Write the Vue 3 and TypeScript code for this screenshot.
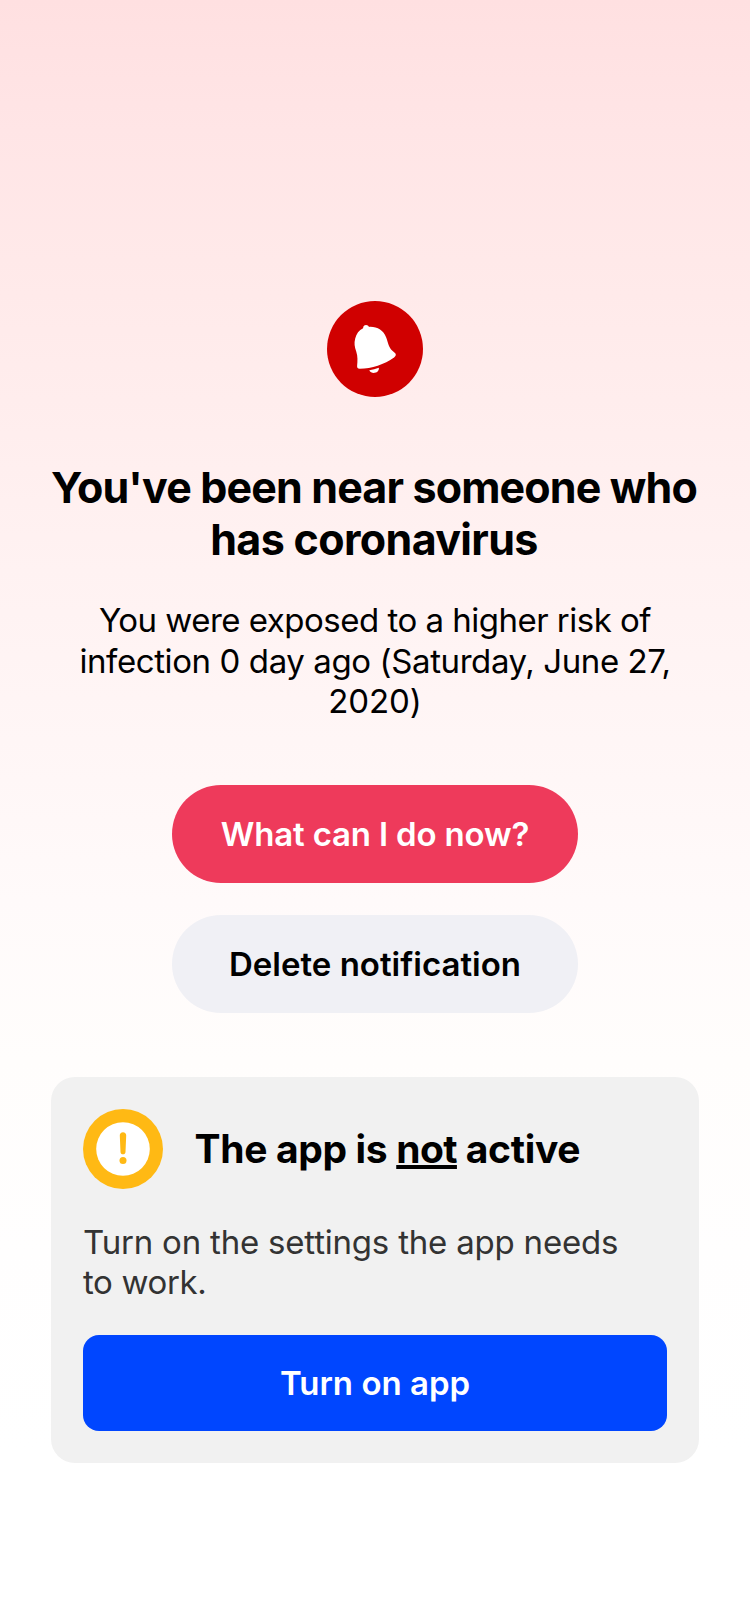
<script setup lang="ts">
import { ref } from 'vue'

interface TextLine {
  text: string
  fit: string
}

const titleLines: TextLine[] = [
  { text: "You've been near someone who", fit: 'title-wide' },
  { text: 'has coronavirus', fit: 'title-short' },
]

const messageLines: TextLine[] = [
  { text: 'You were exposed to a higher risk of', fit: 'msg-tight' },
  { text: 'infection 0 day ago (Saturday, June 27,', fit: 'msg-mid' },
  { text: '2020)', fit: 'msg-end' },
]

const settingsLines: TextLine[] = [
  { text: 'Turn on the settings the app needs', fit: 'set-wide' },
  { text: 'to work.', fit: 'set-short' },
]

const active = ref(false)
</script>

<template>
  <main class="screen">
    <svg class="bell" viewBox="0 0 96 96" aria-hidden="true">
      <circle cx="48" cy="48" r="48" fill="#d00000" />
      <path
        fill="#fff"
        d="M36.1 27.3C36.1 25 37.4 24 39.1 24C40.4 24 41.3 24.7 42 25.9C50 25.4 56.4 29.4 59.2 36.4C61.3 42 61.6 46.2 65.4 49.7L68 52C69.4 53.3 69 55.1 67.1 56.4C57.2 63.2 44.9 67.7 32.7 67.7C30.6 67.7 30 66.8 30.1 65.1C30.6 59.6 30.8 55.4 29.3 50.7C27.6 45.5 26.9 42.3 28.2 37.4C29.4 32.8 31.9 29.4 36.1 27.3Z"
      />
      <path fill="#fff" d="M42.3 69.2C45.6 68.7 48.8 67.9 51.8 66.8C52.3 69.2 50.5 71.4 47.9 71.8C45.5 72.2 43.2 71.2 42.3 69.2Z" />
    </svg>

    <h1 class="title">
      <span v-for="line in titleLines" :key="line.text" :class="line.fit">{{ line.text }}</span>
    </h1>

    <p class="message">
      <span v-for="line in messageLines" :key="line.text" :class="line.fit">{{ line.text }}</span>
    </p>

    <div class="actions">
      <button type="button" class="pill primary">What can I do now?</button>
      <button type="button" class="pill secondary">Delete notification</button>
    </div>

    <section class="card">
      <header class="card-head">
        <svg class="warn" viewBox="0 0 80 80" aria-hidden="true">
          <circle cx="40" cy="40" r="40" fill="#ffb914" />
          <circle cx="40" cy="40" r="26.8" fill="#fff" />
          <path fill="#ffb914" d="M36.8 26.6C36.7 24.6 38.1 23.3 40 23.3C41.9 23.3 43.3 24.6 43.2 26.6L42.5 42.9C42.4 44.4 41.5 45.3 40 45.3C38.5 45.3 37.6 44.4 37.5 42.9Z" />
          <circle cx="40" cy="51.6" r="3.5" fill="#ffb914" />
        </svg>
        <h2 class="card-title">The app is <span v-if="!active" class="not">not</span> active</h2>
      </header>
      <p class="settings">
        <span v-for="line in settingsLines" :key="line.text" :class="line.fit">{{ line.text }}</span>
      </p>
      <button type="button" class="turn-on" @click="active = true">Turn on app</button>
    </section>
  </main>
</template>

<style>
body {
  margin: 0;
  background: #fff;
}
</style>

<style scoped>
.screen {
  box-sizing: border-box;
  display: flex;
  flex-direction: column;
  align-items: center;
  height: 1624px;
  padding: 301px 51px 0;
  background: linear-gradient(
    180deg,
    #ffe0e1 0,
    #ffe5e6 130px,
    #ffe9e9 260px,
    #ffeded 400px,
    #fff2f2 570px,
    #fff6f6 740px,
    #fffafa 900px,
    #fffdfc 1060px,
    #fffefe 1250px,
    #fff 1450px
  );
  color: #000;
  font-family: Inter, "Liberation Sans", sans-serif;
  overflow: hidden;
}

.bell {
  flex: none;
  width: 96px;
  height: 96px;
}

.title,
.message,
.settings {
  display: flex;
  flex-direction: column;
  margin: 0;
  white-space: nowrap;
}

.title {
  align-items: center;
  margin-top: 64px;
  padding-right: 2px;
  font-size: 43px;
  font-weight: 700;
  line-height: 52px;
}

.title-wide {
  letter-spacing: -0.86px;
}

.title-short {
  letter-spacing: -0.65px;
}

.message {
  align-items: center;
  margin-top: 35px;
  font-size: 33px;
  line-height: 40.5px;
}

.msg-tight {
  letter-spacing: -0.51px;
}

.msg-mid {
  letter-spacing: -0.4px;
}

.msg-end {
  letter-spacing: -0.1px;
}

.actions {
  display: flex;
  flex-direction: column;
  gap: 32px;
  width: 406px;
  margin-top: 63.5px;
}

.pill,
.turn-on {
  padding: 0;
  border: 0;
  font-family: inherit;
  font-size: 33px;
  font-weight: 600;
}

.pill {
  height: 98px;
  border-radius: 49px;
  line-height: 98px;
}

.primary {
  background: #ee3a5b;
  color: #fff;
  letter-spacing: -0.17px;
}

.secondary {
  background: #f0f0f5;
  color: #000;
}

.card {
  box-sizing: border-box;
  width: 648px;
  height: 386px;
  margin-top: 64px;
  padding: 32px;
  border-radius: 24px;
  background: #f1f1f1;
}

.card-head {
  display: flex;
  align-items: center;
  gap: 31.5px;
}

.warn {
  flex: none;
  width: 80px;
  height: 80px;
}

.card-title {
  margin: 0;
  font-size: 39px;
  font-weight: 700;
  line-height: 48px;
  letter-spacing: -0.34px;
}

.not {
  letter-spacing: -0.6px;
  text-decoration: underline;
  text-decoration-thickness: 4px;
  text-underline-offset: 2px;
  text-decoration-skip-ink: none;
}

.settings {
  margin-top: 33px;
  color: #333;
  font-size: 33px;
  line-height: 40px;
}

.set-wide {
  letter-spacing: -0.2px;
}

.set-short {
  letter-spacing: -0.35px;
}

.turn-on {
  display: block;
  width: 100%;
  height: 96px;
  margin-top: 33px;
  border-radius: 16px;
  background: #0046ff;
  color: #fff;
  line-height: 96px;
}
</style>
